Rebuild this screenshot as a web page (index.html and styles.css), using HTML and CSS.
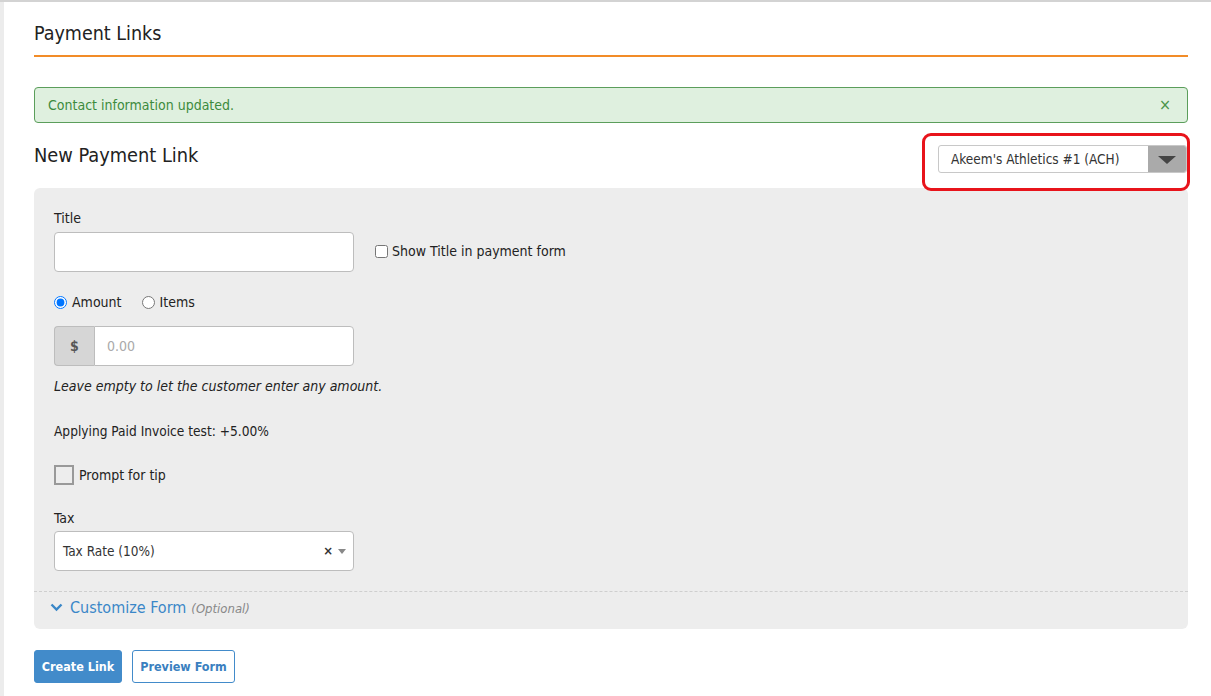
FILE: index.html
```html
<!DOCTYPE html>
<html lang="en">
<head>
    <meta charset="UTF-8">
    <meta name="viewport" content="width=device-width, initial-scale=1.0">
    <title>Payment Links</title>
    <link rel="stylesheet" href="styles.css">
</head>
<body>
    <div class="sidebar-edge"></div>
    <div class="page">
        <h1 class="page-title">Payment Links</h1>

        <div class="alert-success">
            <span>Contact information updated.</span>
            <span class="alert-close">&times;</span>
        </div>

        <div class="section-head">
            <h2>New Payment Link</h2>
            <div class="account-highlight">
                <div class="account-select">
                    <span class="account-name">Akeem's Athletics #1 (ACH)</span>
                    <span class="account-arrow"></span>
                </div>
            </div>
        </div>

        <form class="link-form">
            <div class="form-body">
                <label class="field-label">Title</label>
                <div class="title-row">
                    <input type="text" class="text-input">
                    <label class="inline-check"><input type="checkbox"> Show Title in payment form</label>
                </div>

                <div class="radio-row">
                    <label><input type="radio" name="mode" checked> Amount</label>
                    <label><input type="radio" name="mode"> Items</label>
                </div>

                <div class="input-group">
                    <span class="addon">$</span>
                    <input type="text" placeholder="0.00">
                </div>
                <p class="help-text">Leave empty to let the customer enter any amount.</p>

                <p class="surcharge">Applying Paid Invoice test: +5.00%</p>

                <label class="tip-check"><span class="big-box"></span> Prompt for tip</label>

                <label class="field-label tax-label">Tax</label>
                <div class="tax-select">
                    <span>Tax Rate (10%)</span>
                    <span class="tax-controls"><span class="tax-clear">&times;</span><span class="tax-caret"></span></span>
                </div>
            </div>

            <div class="customize">
                <svg width="13" height="9" viewBox="0 0 13 9"><path d="M1.5 1.5 L6.5 6.5 L11.5 1.5" fill="none" stroke="#3a87c8" stroke-width="2.4"/></svg>
                <span class="customize-title">Customize Form</span>
                <span class="optional">(Optional)</span>
            </div>
        </form>

        <div class="actions">
            <button type="button" class="btn btn-primary">Create Link</button>
            <button type="button" class="btn btn-outline">Preview Form</button>
        </div>
    </div>
</body>
</html>
```

FILE: styles.css
```css
body {
    margin: 0;
    font-family: "DejaVu Sans Condensed", "DejaVu Sans", sans-serif;
    font-size: 14px;
    line-height: 16px;
    color: #222;
    background: #fff;
    border-top: 2px solid #d3d3d3;
    display: flex;
    min-height: 694px;
}

.sidebar-edge {
    width: 4px;
    background: #ececec;
    border-top: 2px solid #3465a4;
    margin-top: -2px;
    flex-shrink: 0;
}

.page {
    flex: 1;
    padding: 0 23px 0 30px;
}

.page-title {
    font-size: 19.5px;
    line-height: 22px;
    font-weight: normal;
    margin: 0;
    padding: 21px 0 10px;
    border-bottom: 2px solid #f28c28;
}

.alert-success {
    margin-top: 30px;
    height: 36px;
    box-sizing: border-box;
    padding: 0 16px 0 13px;
    display: flex;
    align-items: center;
    justify-content: space-between;
    background: #dff0df;
    border: 1px solid #5b9e5b;
    border-radius: 4px;
    color: #3d8b3d;
}

.alert-close {
    font-size: 16px;
    color: #4a944a;
}

.section-head {
    display: flex;
    justify-content: space-between;
    align-items: flex-start;
    margin-top: 10px;
}

.section-head h2 {
    font-size: 19.8px;
    line-height: 22px;
    font-weight: normal;
    margin: 12px 0 0;
}

.account-highlight {
    border: 3px solid #e8141b;
    border-radius: 9px;
    padding: 9px 0 15px 13px;
    margin-right: -2px;
}

.account-select {
    width: 249px;
    height: 28px;
    box-sizing: border-box;
    border: 1px solid #c8c8c8;
    border-radius: 3px;
    display: flex;
    align-items: center;
    justify-content: space-between;
    background: #fff;
    overflow: hidden;
    font-size: 13.5px;
}

.account-name {
    padding-left: 12px;
    color: #333;
}

.account-arrow {
    width: 38px;
    height: 100%;
    background: #aaa;
    position: relative;
}

.account-arrow::after {
    content: "";
    position: absolute;
    left: 10px;
    top: 10px;
    border-left: 9px solid transparent;
    border-right: 9px solid transparent;
    border-top: 8px solid #444;
}

.link-form {
    background: #ededed;
    border-radius: 6px;
    margin-top: -3px;
}

.form-body {
    padding: 22px 20px 20px;
}

.field-label {
    display: block;
    margin-bottom: 6px;
}

.tax-label {
    margin-bottom: 5px;
}

.title-row {
    display: flex;
    align-items: center;
}

.text-input,
.input-group input {
    width: 300px;
    height: 40px;
    box-sizing: border-box;
    border: 1px solid #bdbdbd;
    border-radius: 4px;
    font: inherit;
    padding: 0 10px;
    background: #fff;
}

.inline-check {
    margin-left: 21px;
    margin-top: -2px;
    display: flex;
    align-items: center;
    gap: 4px;
}

.inline-check input,
.radio-row input {
    margin: 0;
}

.radio-row {
    display: flex;
    gap: 20px;
    margin: 22px 0 16px;
}

.radio-row label {
    display: flex;
    align-items: center;
    gap: 5px;
}

.input-group {
    display: flex;
    width: 300px;
}

.input-group .addon {
    width: 40px;
    height: 40px;
    box-sizing: border-box;
    background: #d6d6d6;
    border: 1px solid #bdbdbd;
    border-right: none;
    border-radius: 4px 0 0 4px;
    display: flex;
    align-items: center;
    justify-content: center;
    color: #555;
    font-weight: bold;
}

.input-group input {
    width: 260px;
    border-radius: 0 4px 4px 0;
    padding-left: 12px;
}

.input-group input::placeholder {
    color: #aaa;
}

.help-text {
    font-style: italic;
    margin: 12px 0 0;
}

.surcharge {
    margin: 29px 0 0;
    font-size: 13.6px;
}

.tip-check {
    display: flex;
    align-items: center;
    gap: 5px;
    margin: 26px 0 25px;
}

.big-box {
    width: 20px;
    height: 20px;
    box-sizing: border-box;
    border: 2px solid #999;
    background: #ededed;
}

.tax-select {
    width: 300px;
    height: 40px;
    box-sizing: border-box;
    border: 1px solid #bdbdbd;
    border-radius: 4px;
    background: #fff;
    display: flex;
    align-items: center;
    justify-content: space-between;
    padding: 0 7px 0 8px;
    color: #333;
    font-size: 13.5px;
}

.tax-controls {
    display: flex;
    align-items: center;
    gap: 5px;
}

.tax-clear {
    font-weight: bold;
    font-size: 13px;
}

.tax-caret {
    border-left: 4px solid transparent;
    border-right: 4px solid transparent;
    border-top: 5px solid #888;
}

.customize {
    border-top: 1px dashed #cfcfcf;
    height: 38px;
    box-sizing: border-box;
    padding: 0 0 6px 16px;
    display: flex;
    align-items: center;
}

.customize svg {
    margin-right: 7px;
}

.customize-title {
    color: #3a87c8;
    font-size: 16px;
}

.optional {
    color: #888;
    font-style: italic;
    font-size: 13px;
    margin-left: 5px;
    margin-top: 2px;
}

.actions {
    display: flex;
    gap: 10px;
    margin-top: 21px;
}

.btn {
    height: 33px;
    font: inherit;
    font-size: 12.5px;
    font-weight: bold;
    border-radius: 3px;
    padding: 0;
    cursor: pointer;
}

.btn-primary {
    width: 88px;
    background: #428bca;
    border: 1px solid #428bca;
    color: #fff;
}

.btn-outline {
    width: 103px;
    background: #fff;
    border: 1px solid #428bca;
    color: #3a7fc0;
}
```
